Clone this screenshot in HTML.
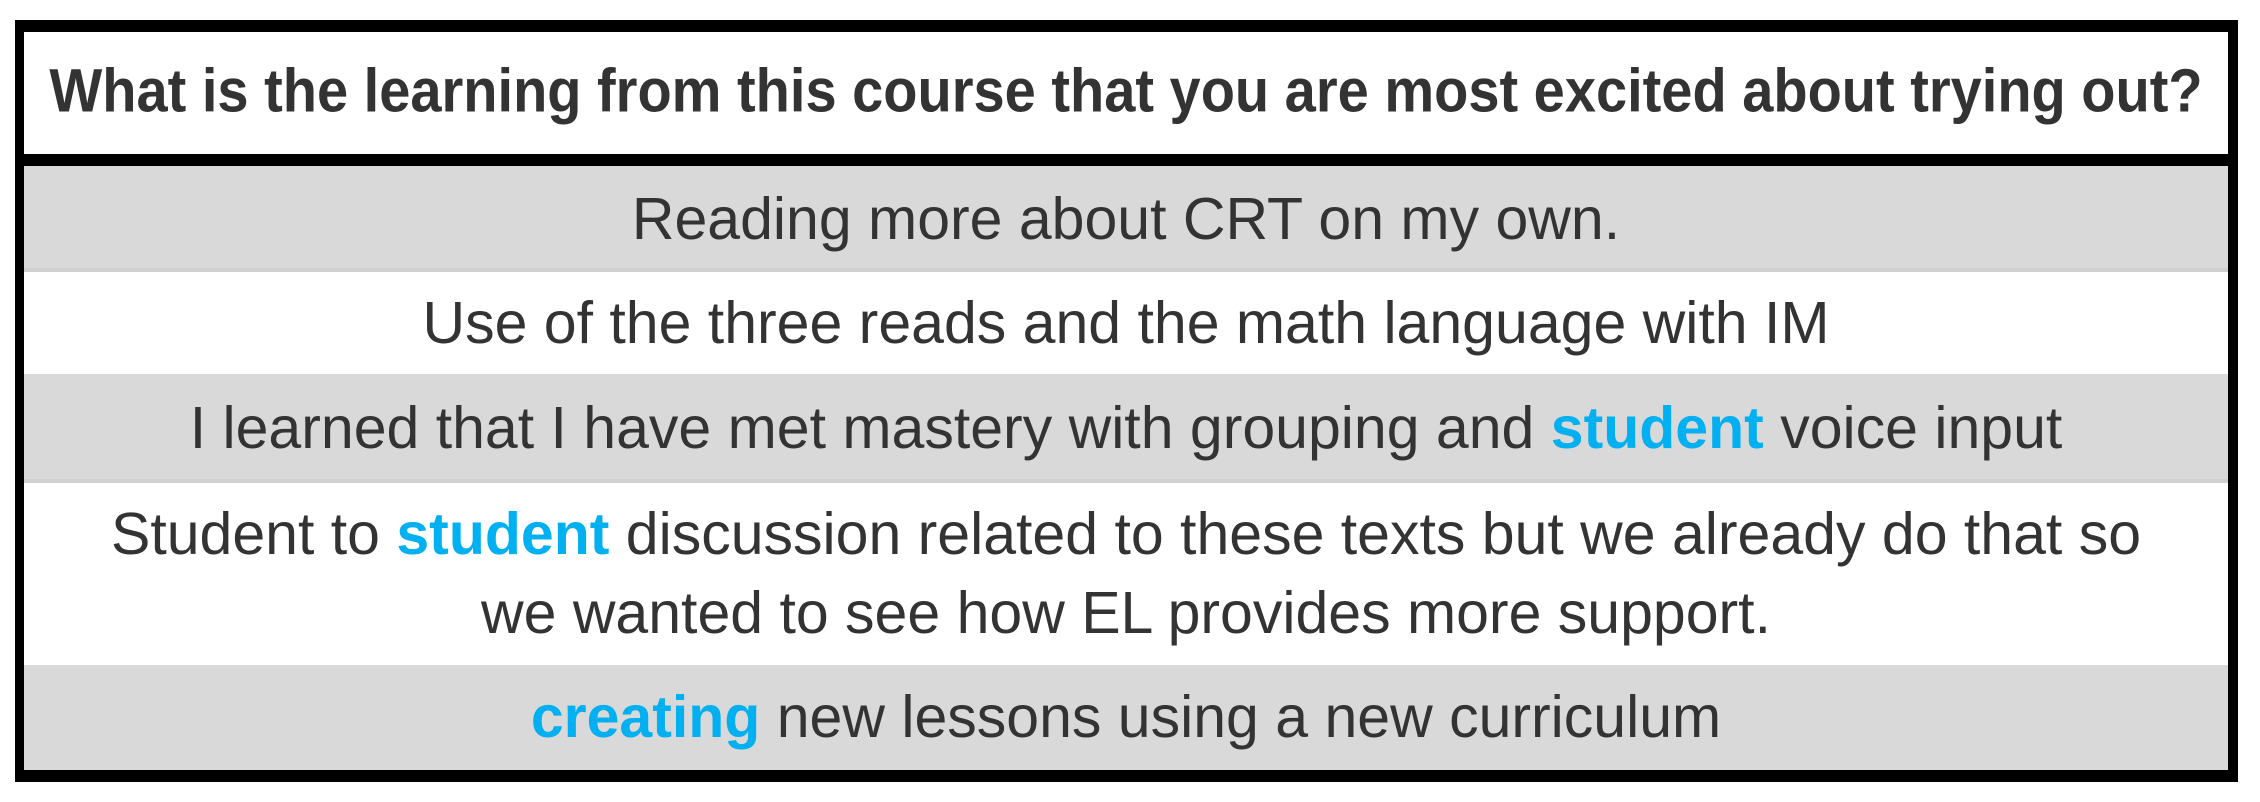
<!DOCTYPE html>
<html><head><meta charset="utf-8"><style>
html,body{margin:0;padding:0;background:#fff;}
body{width:2260px;height:802px;position:relative;overflow:hidden;font-family:"Liberation Sans",sans-serif;color:#333;}
.box{position:absolute;left:15px;top:20px;width:2223px;height:762px;background:#000;}
.in{position:absolute;left:24px;width:2204px;text-align:center;display:flex;align-items:center;justify-content:center;white-space:nowrap;}
.h{top:32px;height:122px;background:#fff;font-weight:bold;font-size:56px;}
.g{background:#d9d9d9;box-shadow:inset 0 -4px 0 #d0d0d0;}
.w{background:#fff;}
.t{font-size:59px;line-height:79px;}
b{color:#00b0f0;}
</style></head><body>
<div class="box"></div>
<div class="in h"><span style="display:inline-block;transform:scaleY(1.1) translateY(-3px)">What is the learning from this course that you are most excited about trying out?</span></div>
<div class="in g t" style="top:166px;height:106px;">Reading more about CRT on my own.</div>
<div class="in w t" style="top:272px;height:102px;">Use of the three reads and the math language with IM</div>
<div class="in g t" style="top:374px;height:109px;"><span>I learned that I have met mastery with grouping and <b>student</b> voice input</span></div>
<div class="in w t" style="top:483px;height:182px;"><span>Student to <b>student</b> discussion related to these texts but we already do that so<br>we wanted to see how EL provides more support.</span></div>
<div class="in g t" style="top:665px;height:105px;box-shadow:none;"><span><b>creating</b> new lessons using a new curriculum</span></div>
</body></html>
